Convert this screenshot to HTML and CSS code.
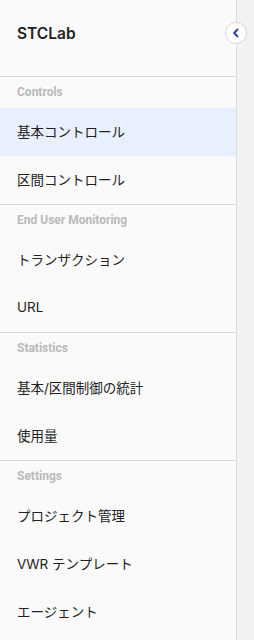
FILE: index.html
```html
<!DOCTYPE html>
<html lang="ja">
<head>
<meta charset="utf-8">
<link rel="stylesheet" href="styles.css">
</head>
<body>
<div class="layout">
  <aside class="sidebar">
    <div class="brand">STCLab</div>
    <button class="collapse" aria-label="collapse">
      <svg width="10" height="10" viewBox="0 0 10 10"><path d="M6.4 1.6 L3.2 5 L6.4 8.4" fill="none" stroke="#2b3ea6" stroke-width="2" stroke-linecap="round" stroke-linejoin="round"/></svg>
    </button>
    <div class="group">
      <div class="label">Controls</div>
      <div class="item active">基本コントロール</div>
      <div class="item">区間コントロール</div>
    </div>
    <div class="group">
      <div class="label">End User Monitoring</div>
      <div class="item">トランザクション</div>
      <div class="item">URL</div>
    </div>
    <div class="group">
      <div class="label">Statistics</div>
      <div class="item">基本/区間制御の統計</div>
      <div class="item">使用量</div>
    </div>
    <div class="group last">
      <div class="label">Settings</div>
      <div class="item">プロジェクト管理</div>
      <div class="item">VWR テンプレート</div>
      <div class="item">エージェント</div>
    </div>
  </aside>
  <main class="main"></main>
</div>
</body>
</html>
```
FILE: styles.css
```css
html, body {
  margin: 0;
  padding: 0;
}
body {
  font-family: Inter, Roboto, "Noto Sans CJK JP", sans-serif;
  background: #f2f2f2;
  color: #222;
}
.layout {
  display: flex;
  height: 640px;
}
.sidebar {
  position: relative;
  width: 236px;
  flex: none;
  background: #fafafa;
  border-right: 1px solid #dcdcdc;
  box-sizing: content-box;
}
.main {
  flex: 1;
  background: #f2f2f2;
}
.brand {
  height: 77px;
  box-sizing: border-box;
  border-bottom: 1px solid #d9d9d9;
  padding-left: 17px;
  display: flex;
  align-items: center;
  font-size: 15.5px;
  font-weight: 600;
  color: #222;
  padding-bottom: 10px;
}
.collapse {
  position: absolute;
  left: 225px;
  top: 22px;
  width: 22px;
  height: 22px;
  border-radius: 50%;
  border: 1px solid #d6d6d6;
  background: #fff;
  padding: 0;
  display: flex;
  align-items: center;
  justify-content: center;
  box-sizing: border-box;
}
.group {
  border-bottom: 1px solid #d9d9d9;
}
.group.last {
  border-bottom: none;
}
.label {
  height: 31px;
  box-sizing: border-box;
  padding-left: 17px;
  padding-top: 8px;
  font-family: Roboto, sans-serif;
  font-size: 12px;
  font-weight: 700;
  color: #b9b9b9;
}
.item {
  height: 48px;
  box-sizing: border-box;
  display: flex;
  align-items: center;
  padding-left: 17px;
  padding-bottom: 2px;
  font-family: Inter, "Noto Sans CJK JP", sans-serif;
  font-size: 13.5px;
  color: #222;
}
.item.active {
  background: #e8efff;
}
```
